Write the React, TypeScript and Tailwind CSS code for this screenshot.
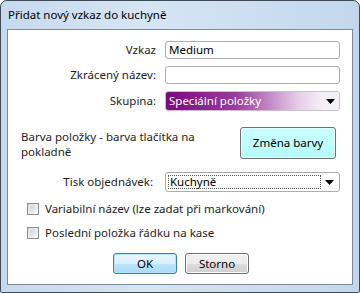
import { ReactNode } from 'react';

const font = { fontFamily: '"Noto Sans", "Open Sans", sans-serif' };

function Field({ label, labelClass = 'pr-[9px]', children }: { label: string; labelClass?: string; children: ReactNode }) {
  return (
    <div className="flex items-center">
      <div className={`w-[157px] shrink-0 text-right ${labelClass} text-[11.5px] text-[#1e1e1e]`}>{label}</div>
      {children}
    </div>
  );
}

function TextBox({ value }: { value?: string }) {
  return (
    <div className="w-[175px] h-[18px] rounded-[3px] border border-[#abadb3] bg-white flex items-center px-[3px] text-[11.5px] text-black leading-none">
      {value}
    </div>
  );
}

function Arrow() {
  return (
    <svg width="9" height="5" viewBox="0 0 9 5">
      <path d="M0 0h9L4.5 5z" fill="#000" />
    </svg>
  );
}

function Checkbox({ label }: { label: string }) {
  return (
    <div className="flex items-center h-[16px] gap-[6px] pl-[19px]">
      <div className="w-[12px] h-[12px] border border-[#8e8f8f] bg-[linear-gradient(135deg,#dcdcdc,#fbfbfb)] p-[2px]">
        <div className="w-full h-full bg-[linear-gradient(135deg,#cbcfd5,#f6f6f6)]" />
      </div>
      <span className="text-[11.5px] leading-[16px] text-[#1e1e1e]">{label}</span>
    </div>
  );
}

export default function App() {
  return (
    <div style={font} className="w-[360px] h-[293px] relative overflow-hidden">
      <div className="w-full h-full rounded-t-[7px] rounded-b-[2px] border border-[#3f4a56] bg-[linear-gradient(90deg,#c6d9ee,#d6e5f4_40%,#c3d7ec)] flex flex-col">
        {/* Title bar */}
        <div className="h-[28px] shrink-0 flex items-center pl-[7px] text-[11.5px] text-black">
          Přidat nový vzkaz do kuchyně
        </div>
        {/* Client area */}
        <div className="mx-[6px] h-[256px] border border-[#7e8a98] bg-white flex flex-col">
          <div className="flex flex-col gap-[7px] pt-[11px]">
            <Field label="Vzkaz">
              <TextBox value="Medium" />
            </Field>
            <Field label="Zkrácený název:">
              <TextBox />
            </Field>
            <Field label="Skupina:">
              <div className="w-[175px] h-[20px] rounded-[3px] border border-[#c9c0d4] overflow-hidden flex">
                <div className="flex-1 flex items-center pl-[3px] text-[11.5px] text-white bg-[linear-gradient(90deg,#7a0a7e,#9a3c9c_45%,#e7cde8_85%,#f6eef7)]">
                  Speciální položky
                </div>
                <div className="w-[17px] flex items-center justify-center bg-[#f4f0f5]">
                  <Arrow />
                </div>
              </div>
            </Field>
          </div>

          <div className="flex items-center mt-[16px]">
            <div className="w-[210px] pl-[13px] text-[11.5px] leading-[15px] text-[#1e1e1e] pt-[2px]">
              Barva položky - barva tlačítka na pokladně
            </div>
            <div className="ml-[22px] w-[96px] h-[32px] rounded-[3px] border border-[#707070] bg-[linear-gradient(180deg,#cbffff,#b5fbfb)] flex items-center justify-center text-[11.5px] text-black shadow-[inset_0_0_0_1px_#e0ffff]">
              Změna barvy
            </div>
          </div>

          <div className="mt-[13px]">
            <Field label="Tisk objednávek:" labelClass="pr-[12px]">
              <div className="w-[175px] h-[20px] rounded-[3px] border border-[#abadb3] bg-white flex items-center p-[2px]">
                <div className="flex-1 h-full border border-dotted border-[#555] flex items-center pl-[1px] text-[11.5px] text-black">
                  Kuchyně
                </div>
                <div className="w-[16px] flex items-center justify-center">
                  <Arrow />
                </div>
              </div>
            </Field>
          </div>

          <div className="flex flex-col gap-[8px] mt-[9px]">
            <Checkbox label="Variabilní název (lze zadat při markování)" />
            <Checkbox label="Poslední položka řádku na kase" />
          </div>

          <div className="flex gap-[8px] pl-[105px] mt-[12px]">
            <div className="w-[64px] h-[21px] rounded-[3px] border border-[#3c7fb1] bg-[linear-gradient(180deg,#eaf6fd,#d9f0fc_50%,#bee6fd_50%,#a7d9f5)] shadow-[inset_0_0_0_1px_#b5e3fb] flex items-center justify-center text-[11.5px] text-black">
              OK
            </div>
            <div className="w-[64px] h-[21px] rounded-[3px] border border-[#707070] bg-[linear-gradient(180deg,#f2f2f2,#ebebeb_50%,#dddddd_50%,#cfcfcf)] shadow-[inset_0_0_0_1px_#fcfcfc] flex items-center justify-center text-[11.5px] text-black">
              Storno
            </div>
          </div>
        </div>
      </div>
    </div>
  );
}
